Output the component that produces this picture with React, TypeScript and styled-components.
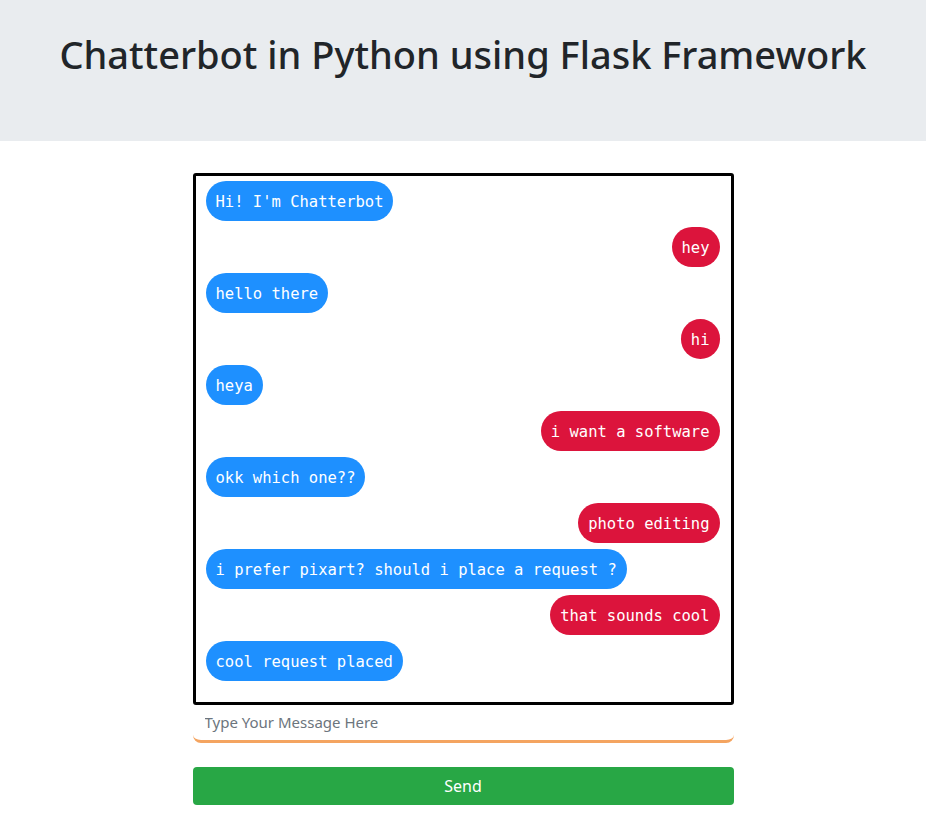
import React from "react";
import styled, { createGlobalStyle } from "styled-components";

const GlobalStyle = createGlobalStyle`
  * { box-sizing: border-box; }
  body {
    margin: 0;
    background: #fff;
    font-family: "Noto Sans", "Open Sans", sans-serif;
    color: #212529;
  }
`;

type Msg = { from: "bot" | "user"; text: string };

const messages: Msg[] = [
  { from: "bot", text: "Hi! I'm Chatterbot" },
  { from: "user", text: "hey" },
  { from: "bot", text: "hello there" },
  { from: "user", text: "hi" },
  { from: "bot", text: "heya" },
  { from: "user", text: "i want a software" },
  { from: "bot", text: "okk which one??" },
  { from: "user", text: "photo editing" },
  { from: "bot", text: "i prefer pixart? should i place a request ?" },
  { from: "user", text: "that sounds cool" },
  { from: "bot", text: "cool request placed" },
];

export default function App() {
  return (
    <>
      <GlobalStyle />
      <Jumbotron>
        <Title>Chatterbot in Python using Flask Framework</Title>
      </Jumbotron>
      <Main>
        <ChatBox>
          {messages.map((m, i) => (
            <Row key={i} $side={m.from}>
              <Bubble $side={m.from}>{m.text}</Bubble>
            </Row>
          ))}
        </ChatBox>
        <MessageInput placeholder="Type Your Message Here" />
        <SendButton>Send</SendButton>
      </Main>
    </>
  );
}

const Jumbotron = styled.header`
  background: #e9ecef;
  height: 141px;
  display: flex;
  justify-content: center;
  padding-top: 32px;
  margin-bottom: 32px;
`;

const Title = styled.h1`
  margin: 0;
  font-size: 38px;
  font-weight: 500;
  line-height: 1.2;
  color: #212529;
`;

const Main = styled.main`
  width: 541px;
  margin: 0 auto;
  display: flex;
  flex-direction: column;
`;

const ChatBox = styled.div`
  height: 532px;
  border: 3px solid #000;
  border-radius: 3px;
  padding: 5px 11px 0 10px;
  display: flex;
  flex-direction: column;
  gap: 6px;
`;

const Row = styled.div<{ $side: "bot" | "user" }>`
  display: flex;
  justify-content: ${(p) => (p.$side === "bot" ? "flex-start" : "flex-end")};
`;

const Bubble = styled.span<{ $side: "bot" | "user" }>`
  height: 40px;
  display: inline-flex;
  align-items: center;
  padding: 2px 10px 0;
  border-radius: 20px;
  background: ${(p) => (p.$side === "bot" ? "#1e90ff" : "#dc143c")};
  color: #fff;
  font-family: "DejaVu Sans Mono", "Liberation Mono", monospace;
  font-size: 15.5px;
  white-space: pre;
`;

const MessageInput = styled.input`
  height: 38px;
  width: 100%;
  border: none;
  border-bottom: 3px solid #f4a460;
  border-radius: 0 0 8px 8px;
  padding: 0 12px 2px;
  font-family: "Noto Sans", "Open Sans", sans-serif;
  font-size: 15px;
  color: #495057;
  outline: none;
  &::placeholder {
    color: #6c757d;
  }
`;

const SendButton = styled.button`
  margin-top: 24px;
  height: 38px;
  width: 100%;
  border: none;
  border-radius: 4px;
  background: #28a745;
  color: #fff;
  font-family: "Noto Sans", "Open Sans", sans-serif;
  font-size: 16px;
  cursor: pointer;
`;
